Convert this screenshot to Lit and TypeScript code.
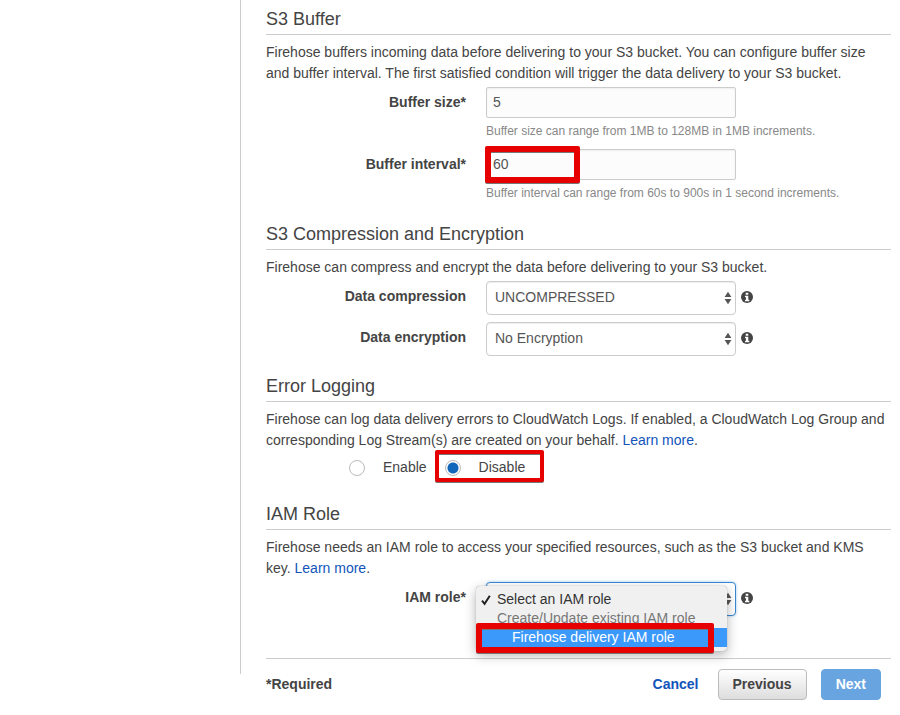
import { LitElement, html, css, svg } from "lit";
import { customElement, property, state } from "lit/decorators.js";
import { classMap } from "lit/directives/class-map.js";

const infoIcon = html`<svg class="info" viewBox="0 0 12 12" role="img" aria-label="More information">
  ${svg`<circle cx="6" cy="6" r="6" fill="#444"/><path d="M4.700 1.800h2.600v2H4.700zM4 4.800h3.300v4h1v1.500H4V8.800h1V6.200H4z" fill="#fff"/>`}
</svg>`;

const arrowsIcon = html`<svg class="arrows" viewBox="0 0 8 14" aria-hidden="true">
  ${svg`<path d="M4 .8L7.400 6H.6zM.6 8h6.800L4 13.200z" fill="currentColor"/>`}
</svg>`;

const checkIcon = html`<svg class="check" viewBox="0 0 10 12" aria-hidden="true">
  <path d="M1 6.600l2.600 3.200L8.800 1.800" fill="none" stroke="#222" stroke-width="2" />
</svg>`;

@customElement("app-root")
export class AppRoot extends LitElement {
  @property({ type: String }) logging = "disable";
  @state() private highlighted = 2;

  private roles = [
    { text: "Select an IAM role", checked: true, muted: false, nested: false },
    { text: "Create/Update existing IAM role", checked: false, muted: true, nested: false },
    { text: "Firehose delivery IAM role", checked: false, muted: false, nested: true },
  ];

  static styles = css`
    :host {
      display: block;
      background: #fff;
      color: #444;
      font: 14px/21px "Liberation Sans", Arial, sans-serif;
    }
    .page {
      display: grid;
      grid-template-columns: 240px 1fr;
    }
    .rail {
      border-right: 1px solid #ccc;
      margin: 0 -1px 40px 0;
    }
    .main {
      padding: 7px 9px 14px 26px;
    }
    .section + .section {
      margin-top: 18px;
    }
    .title {
      margin: 0;
      padding-bottom: 3px;
      border-bottom: 1px solid #ccc;
      font-size: 18px;
      line-height: 24px;
      font-weight: 400;
    }
    .intro {
      margin: 7px 0 3px;
    }
    .link {
      color: #15b;
      text-decoration: none;
    }
    .fields {
      display: grid;
      gap: 7px;
    }
    .field {
      display: grid;
      grid-template-columns: 200px 250px auto;
      column-gap: 20px;
      align-items: start;
    }
    .label {
      margin-top: 5px;
      font-weight: 700;
      text-align: right;
    }
    .control {
      position: relative;
      display: flex;
    }
    .input,
    .select {
      box-sizing: border-box;
      width: 100%;
      margin: 0;
      border: 1px solid #ccc;
      font: inherit;
      color: #555;
      outline: none;
    }
    .input {
      height: 31px;
      padding: 0 6px 2px;
      border-radius: 2px;
      background: #fcfcfc;
      box-shadow: inset 0 1px 2px #eee;
    }
    .select {
      height: 34px;
      padding: 0 8px 2px;
      border-radius: 4px;
      background: #fff;
      appearance: none;
      box-shadow: inset 0 1px 1px #eee;
    }
    .select.open {
      border-color: #3a87d0;
      box-shadow: 0 0 3px #9cc8f0;
    }
    .arrows {
      position: absolute;
      top: 10px;
      right: 4px;
      width: 8px;
      height: 14px;
      color: #555;
      pointer-events: none;
    }
    .info {
      width: 12px;
      height: 12px;
      margin: 10px 0 0 -15px;
    }
    .help {
      grid-column: 2 / -1;
      margin-top: 3px;
      font-size: 12px;
      color: #888;
    }
    .mark {
      position: absolute;
      box-sizing: border-box;
      border: 6px solid #e60000;
      border-radius: 2px;
      filter: drop-shadow(0 1px 0 #777);
      pointer-events: none;
    }
    .mark.value {
      inset: -3px auto -3px -1px;
      width: 95px;
    }
    .mark.radio {
      inset: -7px -19px -4px -10px;
      border-width: 4px;
    }
    .mark.role {
      inset: auto 13px -2px 0;
      height: 30px;
    }
    .choices {
      display: flex;
      gap: 18px;
      margin: 0;
      padding: 3px 0 6px 83px;
    }
    .choice {
      position: relative;
      display: flex;
      align-items: center;
      gap: 18px;
    }
    .dot {
      appearance: none;
      box-sizing: border-box;
      width: 16px;
      height: 16px;
      margin: 0;
      border: 1px solid #bbb;
      border-radius: 50%;
      background: #fff;
    }
    .dot:checked {
      background: radial-gradient(circle, #1166bb 5px, #fff 6px);
    }
    .menu {
      position: absolute;
      z-index: 1;
      top: 4px;
      left: -10px;
      right: 9px;
      padding: 4px 0;
      border-radius: 4px;
      background: #f0f0f0;
      box-shadow: 0 0 1px #888, 0 4px 12px rgba(0, 0, 0, 0.3);
      line-height: 19px;
      color: #333;
    }
    .options {
      margin: 0;
      padding: 0;
      list-style: none;
    }
    .option {
      position: relative;
      padding-left: 21px;
      white-space: nowrap;
    }
    .option.muted {
      color: #777;
    }
    .option.nested {
      padding-left: 36px;
    }
    .option.active {
      background: #3b99fc;
      color: #fff;
    }
    .check {
      position: absolute;
      left: 5px;
      top: 4px;
      width: 10px;
      height: 12px;
    }
    .footer {
      display: flex;
      align-items: center;
      margin-top: 42px;
      padding: 10px 10px 0 0;
      border-top: 1px solid #ccc;
      font-weight: 700;
    }
    .required {
      flex: 1;
    }
    .button {
      box-sizing: border-box;
      height: 31px;
      padding: 0 14px;
      border: 1px solid #bbb;
      border-radius: 4px;
      background: linear-gradient(#fff, #ddd);
      font: inherit;
      line-height: 19px;
      color: #444;
    }
    .previous {
      margin: 0 14px 0 19px;
    }
    .next {
      border-color: #68a4de;
      background: #68a4e0;
      color: #fff;
    }
  `;

  private numberField(id: string, label: string, value: string, help: string, marked = false) {
    return html`<div class="field">
      <label class="label" for=${id}>${label}</label>
      <div class="control">
        <input class="input" id=${id} type="text" .value=${value} aria-describedby="${id}-help" />
        ${marked ? html`<span class="mark value"></span>` : null}
      </div>
      <span class="help" id="${id}-help">${help}</span>
    </div>`;
  }

  private selectField(id: string, label: string, value: string) {
    return html`<div class="field">
      <label class="label" for=${id}>${label}</label>
      <div class="control">
        <select class="select" id=${id}><option>${value}</option></select>
        ${arrowsIcon}
      </div>
      ${infoIcon}
    </div>`;
  }

  private roleMenu() {
    return html`<div class="menu">
      <ul class="options" role="listbox" aria-label="IAM role">
        ${this.roles.map(
          (role, i) => html`<li
            class=${classMap({ option: true, muted: role.muted, nested: role.nested, active: i === this.highlighted })}
            role="option"
            aria-selected=${role.checked ? "true" : "false"}
            @mouseenter=${() => (this.highlighted = i)}
          >${role.checked ? checkIcon : null}${role.text}</li>`
        )}
      </ul>
      <span class="mark role"></span>
    </div>`;
  }

  render() {
    return html`<div class="page">
      <aside class="rail"></aside>
      <main class="main">
        <section class="section">
          <h2 class="title">S3 Buffer</h2>
          <p class="intro">
            Firehose buffers incoming data before delivering to your S3 bucket. You can configure buffer size and
            buffer interval. The first satisfied condition will trigger the data delivery to your S3 bucket.
          </p>
          <div class="fields">
            ${this.numberField("size", "Buffer size*", "5", "Buffer size can range from 1MB to 128MB in 1MB increments.")}
            ${this.numberField("interval", "Buffer interval*", "60", "Buffer interval can range from 60s to 900s in 1 second increments.", true)}
          </div>
        </section>
        <section class="section">
          <h2 class="title">S3 Compression and Encryption</h2>
          <p class="intro">Firehose can compress and encrypt the data before delivering to your S3 bucket.</p>
          <div class="fields">
            ${this.selectField("compression", "Data compression", "UNCOMPRESSED")}
            ${this.selectField("encryption", "Data encryption", "No Encryption")}
          </div>
        </section>
        <section class="section">
          <h2 class="title">Error Logging</h2>
          <p class="intro">
            Firehose can log data delivery errors to CloudWatch Logs. If enabled, a CloudWatch Log Group and
            corresponding Log Stream(s) are created on your behalf. <a class="link" href="#logs">Learn more</a>.
          </p>
          <div class="choices" role="radiogroup" aria-label="Error logging">
            <label class="choice">
              <input class="dot" type="radio" name="logging" value="enable" .checked=${this.logging === "enable"} />Enable
            </label>
            <label class="choice">
              <input class="dot" type="radio" name="logging" value="disable" .checked=${this.logging === "disable"} />Disable
              <span class="mark radio"></span>
            </label>
          </div>
        </section>
        <section class="section">
          <h2 class="title">IAM Role</h2>
          <p class="intro">
            Firehose needs an IAM role to access your specified resources, such as the S3 bucket and KMS key.
            <a class="link" href="#role">Learn more</a>.
          </p>
          <div class="field">
            <label class="label" for="role">IAM role*</label>
            <div class="control">
              <select class="select open" id="role"><option>Select an IAM role</option></select>
              ${arrowsIcon} ${this.roleMenu()}
            </div>
            ${infoIcon}
          </div>
        </section>
        <footer class="footer">
          <span class="required">*Required</span>
          <a class="link" href="#cancel">Cancel</a>
          <button class="button previous" type="button">Previous</button>
          <button class="button next" type="button">Next</button>
        </footer>
      </main>
    </div>`;
  }
}
